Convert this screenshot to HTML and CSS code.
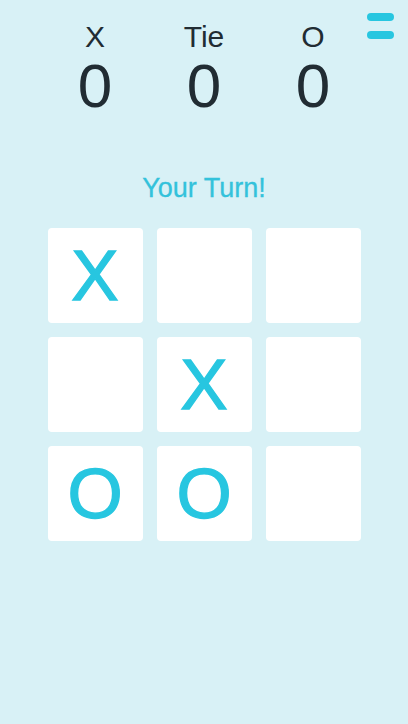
FILE: index.html
```html
<!DOCTYPE html>
<html>
<head>
<meta charset="utf-8">
<link rel="stylesheet" href="styles.css">
</head>
<body>
<div class="app">
  <button class="menu" aria-label="Menu"><span class="bar"></span><span class="bar"></span></button>
  <div class="scores">
    <div class="score"><div class="label">X</div><div class="value">0</div></div>
    <div class="score"><div class="label">Tie</div><div class="value">0</div></div>
    <div class="score"><div class="label">O</div><div class="value">0</div></div>
  </div>
  <div class="status">Your Turn!</div>
  <div class="board">
    <div class="cell">X</div>
    <div class="cell"></div>
    <div class="cell"></div>
    <div class="cell"></div>
    <div class="cell">X</div>
    <div class="cell"></div>
    <div class="cell">O</div>
    <div class="cell">O</div>
    <div class="cell"></div>
  </div>
</div>
</body>
</html>
```
FILE: styles.css
```css
html, body {
  margin: 0;
  padding: 0;
  background: #d8f1f6;
  font-family: "Liberation Sans", Arial, sans-serif;
}
.app {
  position: relative;
  width: 408px;
  min-height: 724px;
  display: flex;
  flex-direction: column;
  align-items: center;
  padding-top: 22px;
  box-sizing: border-box;
}
.menu {
  position: absolute;
  top: 13px;
  right: 14px;
  display: flex;
  flex-direction: column;
  gap: 10px;
  padding: 0;
  border: 0;
  background: transparent;
}
.menu .bar {
  display: block;
  width: 27px;
  height: 8px;
  border-radius: 4px;
  background: #27c6e0;
}
.scores {
  display: grid;
  grid-template-columns: repeat(3, 95px);
  column-gap: 14px;
  color: #212c33;
}
.score {
  display: flex;
  flex-direction: column;
  align-items: center;
  gap: 3px;
}
.label {
  font-size: 30px;
  line-height: 30px;
}
.value {
  font-size: 62px;
  line-height: 62px;
}
.status {
  margin-top: 58px;
  font-size: 27px;
  line-height: 27px;
  color: #33c2db;
  -webkit-text-stroke: 0.3px #33c2db;
}
.board {
  margin-top: 26px;
  display: grid;
  grid-template-columns: repeat(3, 95px);
  grid-template-rows: repeat(3, 95px);
  gap: 14px;
}
.cell {
  background: #ffffff;
  border-radius: 4px;
  display: flex;
  align-items: center;
  justify-content: center;
  font-size: 71px;
  line-height: 1;
  color: #27c6e0;
  -webkit-text-stroke: 1.3px #27c6e0;
}
```
